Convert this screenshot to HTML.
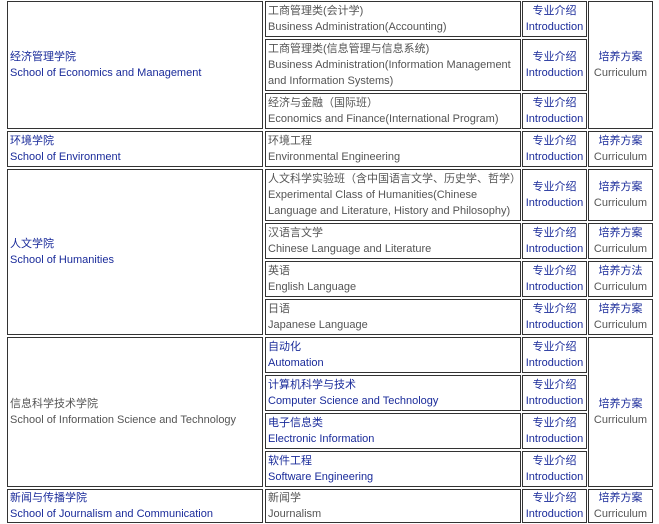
<!DOCTYPE html>
<html><head><meta charset="utf-8"><style>
body{margin:0;width:659px;height:524px;background:#fff;position:relative;overflow:hidden;font-family:"Liberation Sans","Noto Sans CJK SC",sans-serif;font-size:11px;line-height:16px;color:#555}
.b{position:absolute;box-sizing:border-box;border:1px solid #333;display:flex;flex-direction:column;justify-content:center;padding-left:2px;white-space:nowrap;overflow:visible}
.c{align-items:center;padding-left:0;text-align:center}
.bl{color:#1a2b9a}
.g{color:#555}
</style></head><body>
<!-- col1 -->
<div class="b bl" style="left:7px;top:1px;width:256px;height:128px">经济管理学院<br>School of Economics and Management</div>
<div class="b bl" style="left:7px;top:131px;width:256px;height:36px">环境学院<br>School of Environment</div>
<div class="b bl" style="left:7px;top:169px;width:256px;height:166px">人文学院<br>School of Humanities</div>
<div class="b g" style="left:7px;top:337px;width:256px;height:150px">信息科学技术学院<br>School of Information Science and Technology</div>
<div class="b bl" style="left:7px;top:489px;width:256px;height:34px">新闻与传播学院<br>School of Journalism and Communication</div>
<!-- col2 -->
<div class="b g" style="left:265px;top:1px;width:256px;height:36px">工商管理类(会计学)<br>Business Administration(Accounting)</div>
<div class="b g" style="left:265px;top:39px;width:256px;height:52px">工商管理类(信息管理与信息系统)<br>Business Administration(Information Management<br>and Information Systems)</div>
<div class="b g" style="left:265px;top:93px;width:256px;height:36px">经济与金融（国际班）<br>Economics and Finance(International Program)</div>
<div class="b g" style="left:265px;top:131px;width:256px;height:36px">环境工程<br>Environmental Engineering</div>
<div class="b g" style="left:265px;top:169px;width:256px;height:52px">人文科学实验班（含中国语言文学、历史学、哲学）<br>Experimental Class of Humanities(Chinese<br>Language and Literature, History and Philosophy)</div>
<div class="b g" style="left:265px;top:223px;width:256px;height:36px">汉语言文学<br>Chinese Language and Literature</div>
<div class="b g" style="left:265px;top:261px;width:256px;height:36px">英语<br>English Language</div>
<div class="b g" style="left:265px;top:299px;width:256px;height:36px">日语<br>Japanese Language</div>
<div class="b bl" style="left:265px;top:337px;width:256px;height:36px">自动化<br>Automation</div>
<div class="b bl" style="left:265px;top:375px;width:256px;height:36px">计算机科学与技术<br>Computer Science and Technology</div>
<div class="b bl" style="left:265px;top:413px;width:256px;height:36px">电子信息类<br>Electronic Information</div>
<div class="b bl" style="left:265px;top:451px;width:256px;height:36px">软件工程<br>Software Engineering</div>
<div class="b g" style="left:265px;top:489px;width:256px;height:34px">新闻学<br>Journalism</div>
<!-- col3 -->
<div class="b c bl" style="left:522px;top:1px;width:65px;height:36px">专业介绍<br>Introduction</div>
<div class="b c bl" style="left:522px;top:39px;width:65px;height:52px">专业介绍<br>Introduction</div>
<div class="b c bl" style="left:522px;top:93px;width:65px;height:36px">专业介绍<br>Introduction</div>
<div class="b c bl" style="left:522px;top:131px;width:65px;height:36px">专业介绍<br>Introduction</div>
<div class="b c bl" style="left:522px;top:169px;width:65px;height:52px">专业介绍<br>Introduction</div>
<div class="b c bl" style="left:522px;top:223px;width:65px;height:36px">专业介绍<br>Introduction</div>
<div class="b c bl" style="left:522px;top:261px;width:65px;height:36px">专业介绍<br>Introduction</div>
<div class="b c bl" style="left:522px;top:299px;width:65px;height:36px">专业介绍<br>Introduction</div>
<div class="b c bl" style="left:522px;top:337px;width:65px;height:36px">专业介绍<br>Introduction</div>
<div class="b c bl" style="left:522px;top:375px;width:65px;height:36px">专业介绍<br>Introduction</div>
<div class="b c bl" style="left:522px;top:413px;width:65px;height:36px">专业介绍<br>Introduction</div>
<div class="b c bl" style="left:522px;top:451px;width:65px;height:36px">专业介绍<br>Introduction</div>
<div class="b c bl" style="left:522px;top:489px;width:65px;height:34px">专业介绍<br>Introduction</div>
<!-- col4 -->
<div class="b c" style="left:588px;top:1px;width:65px;height:128px"><span class="bl">培养方案</span><span class="g">Curriculum</span></div>
<div class="b c" style="left:588px;top:131px;width:65px;height:36px"><span class="bl">培养方案</span><span class="g">Curriculum</span></div>
<div class="b c" style="left:588px;top:169px;width:65px;height:52px"><span class="bl">培养方案</span><span class="g">Curriculum</span></div>
<div class="b c" style="left:588px;top:223px;width:65px;height:36px"><span class="bl">培养方案</span><span class="g">Curriculum</span></div>
<div class="b c" style="left:588px;top:261px;width:65px;height:36px"><span class="bl">培养方法</span><span class="g">Curriculum</span></div>
<div class="b c" style="left:588px;top:299px;width:65px;height:36px"><span class="bl">培养方案</span><span class="g">Curriculum</span></div>
<div class="b c" style="left:588px;top:337px;width:65px;height:150px"><span class="bl">培养方案</span><span class="g">Curriculum</span></div>
<div class="b c" style="left:588px;top:489px;width:65px;height:34px"><span class="bl">培养方案</span><span class="g">Curriculum</span></div>
</body></html>
